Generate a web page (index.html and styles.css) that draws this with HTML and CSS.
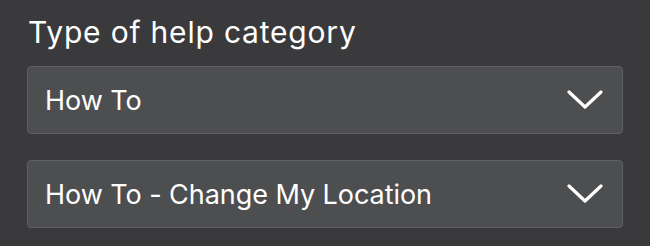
FILE: index.html
```html
<!DOCTYPE html>
<html lang="en">
<head>
<meta charset="utf-8">
<title>Help category</title>
<link rel="stylesheet" href="styles.css">
</head>
<body>
<main class="form">
  <label class="label" for="cat">Type of help category</label>
  <div class="select" id="cat">
    <span class="value">How To</span>
    <svg class="chevron" viewBox="0 0 36 20" width="36" height="20" aria-hidden="true"><path d="M2 2 L18 17 L34 2" fill="none" stroke="#ffffff" stroke-width="3.2" stroke-linecap="round" stroke-linejoin="round"/></svg>
  </div>
  <div class="select">
    <span class="value">How To - Change My Location</span>
    <svg class="chevron" viewBox="0 0 36 20" width="36" height="20" aria-hidden="true"><path d="M2 2 L18 17 L34 2" fill="none" stroke="#ffffff" stroke-width="3.2" stroke-linecap="round" stroke-linejoin="round"/></svg>
  </div>
</main>
</body>
</html>
```
FILE: styles.css
```css
html, body {
  margin: 0;
  padding: 0;
  background: #3a3a3c;
}
body {
  font-family: Inter, "Open Sans", sans-serif;
  color: #ffffff;
}
.form {
  display: flex;
  flex-direction: column;
  padding: 12px 27px 0 27px;
  gap: 26px;
}
.label {
  font-size: 30px;
  letter-spacing: 0.8px;
  line-height: 40px;
  margin-bottom: -12px;
  padding-left: 1px;
}
.select {
  box-sizing: border-box;
  height: 68px;
  display: flex;
  align-items: center;
  justify-content: space-between;
  padding: 0 19px 0 17px;
  background: #4d4e50;
  border: 1px solid #5f6062;
  border-radius: 4px;
}
.value {
  font-size: 27px;
  letter-spacing: -0.05px;
}
.chevron {
  display: block;
}
```
